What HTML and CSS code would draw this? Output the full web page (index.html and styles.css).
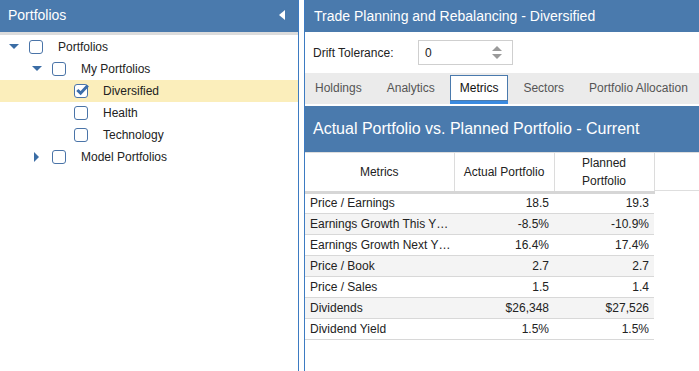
FILE: index.html
```html
<!DOCTYPE html>
<html>
	<head>
		<meta charset="UTF-8">
		<title>Trade Planning</title>
		<link rel="stylesheet" href="styles.css">
	</head>
	<body>
		<div class="layout">
			<!-- left: portfolio tree -->
			<div class="side">
				<div class="side-head">
					<span>Portfolios</span>
					<span class="collapse"></span>
				</div>
				<ul class="tree">
					<li class="node lv0"><span class="tog down"></span><span class="chk"></span><span class="lbl">Portfolios</span></li>
					<li class="node lv1"><span class="tog down"></span><span class="chk"></span><span class="lbl">My Portfolios</span></li>
					<li class="node lv2 sel"><span class="tog"></span><span class="chk on"><svg width="14" height="14" viewBox="0 0 14 14"><path d="M2.3 7 L5.6 10.2 L12.8 2.4" fill="none" stroke="#3c6eaa" stroke-width="3"/></svg></span><span class="lbl">Diversified</span></li>
					<li class="node lv2"><span class="tog"></span><span class="chk"></span><span class="lbl">Health</span></li>
					<li class="node lv2"><span class="tog"></span><span class="chk"></span><span class="lbl">Technology</span></li>
					<li class="node lv1"><span class="tog right"></span><span class="chk"></span><span class="lbl">Model Portfolios</span></li>
				</ul>
			</div>

			<!-- right: trade planning -->
			<div class="main">
				<div class="main-head">Trade Planning and Rebalancing - Diversified</div>
				<div class="drift">
					<span class="drift-lbl">Drift Tolerance:</span>
					<div class="spin">
						<span>0</span>
						<span class="arrows"><i class="up"></i><i class="dn"></i></span>
					</div>
				</div>
				<ul class="tabs">
					<li>Holdings</li>
					<li>Analytics</li>
					<li class="active">Metrics</li>
					<li>Sectors</li>
					<li>Portfolio Allocation</li>
				</ul>
				<div class="title">Actual Portfolio vs. Planned Portfolio - Current</div>
				<div class="grid">
					<table>
						<colgroup><col class="c1"><col class="c2"><col class="c3"></colgroup>
						<thead>
							<tr><th>Metrics</th><th class="h2">Actual Portfolio</th><th class="h3">Planned Portfolio</th></tr>
						</thead>
						<tbody>
							<tr><td>Price / Earnings</td><td class="num">18.5</td><td class="num">19.3</td></tr>
							<tr class="alt"><td>Earnings Growth This Y…</td><td class="num">-8.5%</td><td class="num">-10.9%</td></tr>
							<tr><td>Earnings Growth Next Y…</td><td class="num">16.4%</td><td class="num">17.4%</td></tr>
							<tr class="alt"><td>Price / Book</td><td class="num">2.7</td><td class="num">2.7</td></tr>
							<tr><td>Price / Sales</td><td class="num">1.5</td><td class="num">1.4</td></tr>
							<tr class="alt"><td>Dividends</td><td class="num">$26,348</td><td class="num">$27,526</td></tr>
							<tr><td>Dividend Yield</td><td class="num">1.5%</td><td class="num">1.5%</td></tr>
						</tbody>
					</table>
					<div class="filler"></div>
				</div>
			</div>
		</div>
	</body>
</html>
```

FILE: styles.css
```css
*{padding:0;margin:0;box-sizing:border-box;}
body{font-family:"Liberation Sans",Arial,sans-serif;font-size:12px;color:#222;background:#fff;}
.layout{display:flex;height:371px;}

/* left panel */
.side{width:299px;border-right:1px solid #3d7bc2;}
.side-head{height:35px;background:#4a7aad;color:#fff;font-size:14px;
	display:flex;align-items:center;justify-content:space-between;
	padding:0 13px 2px 8px;border-bottom:3px solid #dcdcdc;}
.collapse{width:0;height:0;border-top:5px solid transparent;border-bottom:5px solid transparent;border-right:6px solid #fff;}
.tree{list-style:none;padding-top:1px;}
.node{height:22px;display:flex;align-items:center;}
.node.sel{background:#fbeebb;}
.lv0{padding-left:9px;}
.lv1{padding-left:32px;}
.lv2{padding-left:54px;}
.tog{width:20px;height:10px;position:relative;}
.tog.down:after{content:"";position:absolute;left:0;top:2px;border-left:5px solid transparent;border-right:5px solid transparent;border-top:5px solid #3b6da5;}
.tog.right:after{content:"";position:absolute;left:2px;top:0;border-top:5px solid transparent;border-bottom:5px solid transparent;border-left:5px solid #3b6da5;}
.chk{width:14px;height:14px;border:1px solid #4a74a8;border-radius:3px;background:#fff;position:relative;}
.chk svg{position:absolute;left:0;top:-2px;}
.lbl{margin-left:15px;}

/* right panel */
.main{flex:1;margin-left:5px;border-left:1px solid #3d7bc2;min-width:0;}
.main-head{height:32px;background:#4a7aad;color:#fff;font-size:14px;display:flex;align-items:center;padding-left:9px;}
.drift{height:41px;display:flex;align-items:center;padding-left:8px;}
.drift-lbl{width:105px;}
.spin{width:95px;height:25px;border:1px solid #cfcfcf;display:flex;align-items:center;justify-content:space-between;padding:0 10px 0 6px;}
.arrows{display:flex;flex-direction:column;gap:3px;}
.arrows i{width:0;height:0;border-left:5px solid transparent;border-right:5px solid transparent;}
.arrows .up{border-bottom:5px solid #9a9a9a;}
.arrows .dn{border-top:5px solid #9a9a9a;}

.tabs{list-style:none;display:flex;background:#ebebeb;height:31px;padding-top:2px;overflow:hidden;}
.tabs li{flex-shrink:0;white-space:nowrap;height:26px;padding:0 9px;border:1px solid transparent;margin-right:5px;color:#555;display:flex;align-items:center;}
.tabs li.active{background:#fff;border-color:#4a7aad;color:#111;box-shadow:0 3px 0 #3a8ae0;}

.title{margin-top:2px;height:46px;background:#4a7aad;color:#fff;font-size:16px;display:flex;align-items:center;padding-left:8px;}

.grid{display:flex;align-items:flex-start;border-top:1px solid #dedede;}
.filler{flex:1;height:38px;border-bottom:1px solid #dedede;}
table{width:349px;flex-shrink:0;table-layout:fixed;border-collapse:collapse;}
col.c1{width:149px;}
col.c2{width:100px;}
col.c3{width:100px;}
th{height:39px;font-weight:normal;line-height:18px;padding:0 4px;border-right:1px solid #dcdcdc;border-bottom:3px solid #d6d6d6;text-align:center;}
th.h2{white-space:nowrap;padding:0 2px;}
th.h3{padding:0 12px;}
td{height:21px;padding:0 5px;border-bottom:1px solid #d8d8d8;white-space:nowrap;overflow:hidden;}
td.num{text-align:right;}
tr.alt td{background:#f4f4f4;}
```
